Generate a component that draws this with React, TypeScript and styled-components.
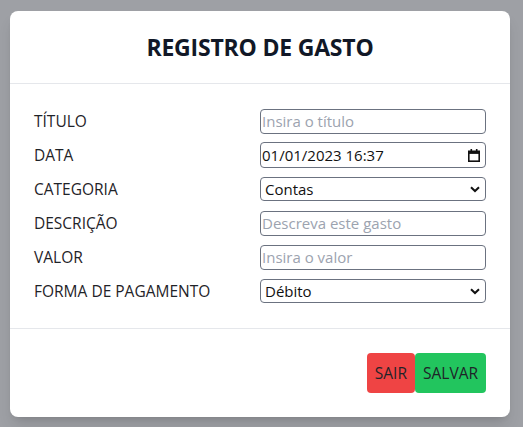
import React from "react";
import styled, { createGlobalStyle } from "styled-components";

const GlobalStyle = createGlobalStyle`
  html, body {
    margin: 0;
    padding: 0;
    background: #9ea0a5;
  }
  body {
    font-family: "Open Sans", "Noto Sans", sans-serif;
    color: #1f2328;
  }
  * { box-sizing: border-box; }
`;

const Page = styled.div`
  min-height: 100vh;
  padding: 11px 13px 10px 10px;
  display: flex;
  align-items: flex-start;
`;

const Modal = styled.div`
  width: 500px;
  background: #ffffff;
  border-radius: 8px;
  box-shadow: 0 10px 15px -3px rgba(0, 0, 0, 0.12), 0 4px 6px -4px rgba(0, 0, 0, 0.12);
  display: flex;
  flex-direction: column;
`;

const Header = styled.header`
  padding: 20px;
  border-bottom: 1px solid #e5e7eb;
`;

const Title = styled.h2`
  margin: 0;
  font-size: 23px;
  line-height: 32px;
  font-weight: 700;
  text-align: center;
  color: #111827;
  letter-spacing: -0.2px;
`;

const Form = styled.form`
  padding: 24px;
  display: grid;
  grid-template-columns: 1fr 1fr;
  row-gap: 8px;
  grid-auto-rows: minmax(26px, auto);
  align-items: center;
`;

const Label = styled.label`
  font-size: 15.5px;
  line-height: 24px;
  color: #1f2328;
`;

const controlBase = `
  width: 100%;
  border: 1px solid #6b7280;
  border-radius: 4px;
  background: #ffffff;
  font-family: "Open Sans", "Noto Sans", sans-serif;
  font-size: 15px;
  color: #111111;
`;

const TextInput = styled.input`
  ${controlBase}
  height: 25px;
  padding: 0 0 0 1px;
  outline: none;
  &::placeholder {
    color: #9ca3af;
    opacity: 1;
  }
`;

const FieldBox = styled.div<{ $h: number }>`
  ${controlBase}
  height: ${(p) => p.$h}px;
  display: flex;
  align-items: center;
  padding: 0 5px 0 1px;
`;

const InnerInput = styled.input`
  flex: 1;
  min-width: 0;
  border: none;
  outline: none;
  padding: 0;
  background: transparent;
  font-family: inherit;
  font-size: 15px;
  color: #111111;
`;

const InnerSelect = styled.select`
  flex: 1;
  min-width: 0;
  appearance: none;
  -webkit-appearance: none;
  border: none;
  outline: none;
  padding: 0 0 0 3px;
  background: transparent;
  font-family: inherit;
  font-size: 15px;
  color: #111111;
`;

const Footer = styled.footer`
  border-top: 1px solid #e5e7eb;
  padding: 24px;
  display: flex;
  justify-content: flex-end;
`;

const Button = styled.button<{ $variant: "danger" | "success" }>`
  height: 40px;
  padding: 0 8px;
  border: none;
  border-radius: 4px;
  font-family: "Open Sans", "Noto Sans", sans-serif;
  font-size: 15.5px;
  color: #1f2328;
  background: ${(p) => (p.$variant === "danger" ? "#ef4444" : "#22c55e")};
  cursor: pointer;
`;

const CalendarIcon = () => (
  <svg width="12" height="13" viewBox="0 0 12 13" aria-hidden="true">
    <rect x="2.5" y="0" width="1.6" height="3" fill="#111" />
    <rect x="7.9" y="0" width="1.6" height="3" fill="#111" />
    <rect x="0.8" y="2.3" width="10.4" height="9.9" fill="none" stroke="#111" strokeWidth="1.6" />
    <rect x="0.8" y="2.3" width="10.4" height="2.6" fill="#111" />
  </svg>
);

const Chevron = () => (
  <svg width="10" height="7" viewBox="0 0 10 7" aria-hidden="true">
    <path d="M1 1.2 L5 5 L9 1.2" fill="none" stroke="#111" strokeWidth="2" />
  </svg>
);

export default function App() {
  return (
    <>
      <GlobalStyle />
      <Page>
        <Modal>
          <Header>
            <Title>REGISTRO DE GASTO</Title>
          </Header>
          <Form onSubmit={(e) => e.preventDefault()}>
            <Label htmlFor="titulo">TÍTULO</Label>
            <TextInput id="titulo" placeholder="Insira o título" />

            <Label htmlFor="data">DATA</Label>
            <FieldBox $h={26}>
              <InnerInput id="data" defaultValue="01/01/2023 16:37" />
              <CalendarIcon />
            </FieldBox>

            <Label htmlFor="categoria">CATEGORIA</Label>
            <FieldBox $h={24}>
              <InnerSelect id="categoria" defaultValue="Contas">
                <option>Contas</option>
                <option>Alimentação</option>
                <option>Lazer</option>
              </InnerSelect>
              <Chevron />
            </FieldBox>

            <Label htmlFor="descricao">DESCRIÇÃO</Label>
            <TextInput id="descricao" placeholder="Descreva este gasto" />

            <Label htmlFor="valor">VALOR</Label>
            <TextInput id="valor" placeholder="Insira o valor" />

            <Label htmlFor="pagamento">FORMA DE PAGAMENTO</Label>
            <FieldBox $h={24}>
              <InnerSelect id="pagamento" defaultValue="Débito">
                <option>Débito</option>
                <option>Crédito</option>
                <option>Dinheiro</option>
                <option>Pix</option>
              </InnerSelect>
              <Chevron />
            </FieldBox>
          </Form>
          <Footer>
            <Button type="button" $variant="danger">SAIR</Button>
            <Button type="button" $variant="success">SALVAR</Button>
          </Footer>
        </Modal>
      </Page>
    </>
  );
}
